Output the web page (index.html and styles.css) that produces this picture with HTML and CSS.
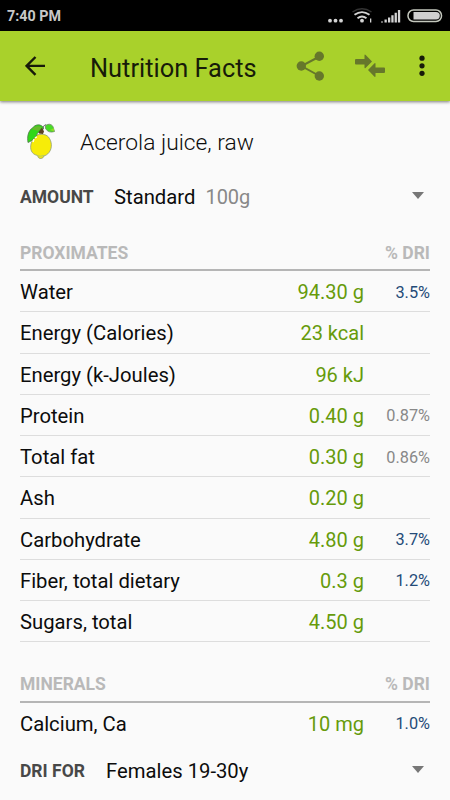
FILE: index.html
```
<!DOCTYPE html>
<html lang="en">

<head>
    <meta charset="utf-8">
    <title>Nutrition Facts</title>
    <link rel="stylesheet" href="styles.css">
</head>

<body>
    <div class="status-bar">
        <span class="time">7:40 PM</span>
        <svg class="status-icons" width="124" height="31" viewBox="0 0 124 31">
            <g fill="#d4d4d4">
                <circle cx="4" cy="20.7" r="1.9" />
                <circle cx="9.500" cy="20.7" r="1.9" />
                <circle cx="15" cy="20.7" r="1.9" />
                <circle cx="36" cy="20.7" r="1.9" />
                <path d="M55 22.5v-1h2v1zM58.5 22.5v-3h2.3v3zM62 22.5v-5h2.3v5zM65.3 22.5v-7.3h2.3v7.3zM68.6 22.5v-9.8h2.3v9.8zM71.9 22.5V10h2.3v12.500z" />
                <path d="M44 18.500h1.300v4h-1.300z" />
            </g>
            <g fill="none" stroke="#d4d4d4" stroke-width="1.8">
                <path d="M28.500 14.800q7.500-5.500 15 0" />
                <path d="M31.500 18.200q4.500-3.500 9 0" />
            </g>
            <path d="M26.500 12q9.500-6.500 19 0" fill="none" stroke="#333" stroke-width="1.500" />
            <rect x="82" y="10" width="33.500" height="11.500" rx="5.500" fill="none" stroke="#c4c8bd" stroke-width="1.500" />
            <path d="M87.500 12H110q3.800 0 3.800 3.700T110 19.500H87.500z" fill="#d0d0d0" />
        </svg>
    </div>

    <header class="toolbar">
        <svg class="back" width="21" height="20" viewBox="0 0 21 20">
            <path d="M10.500 1 1.600 9.900l8.900 8.900M2 9.900h18" />
        </svg>
        <h1>Nutrition Facts</h1>
        <svg class="share" width="30" height="30" viewBox="0 0 30 30">
            <path d="M23.500 5.500 5.500 15l18 10" fill="none" stroke="#66772b" stroke-width="2" />
            <circle cx="23.300" cy="5.300" r="4.700" />
            <circle cx="5.300" cy="15" r="4.700" />
            <circle cx="23.300" cy="25" r="4.700" />
        </svg>
        <svg class="compare" width="30" height="24" viewBox="0 0 30 24">
            <path d="M1 5h8.500V1.500q0-1.500 1.200-.5l6.300 6.500-6.500 6.500q-1 .8-1-.500V10.500H1q-1 0-1-1V6q0-1 1-1z" />
            <path d="M29 13.500h-8.500V10q0-1.500-1.200-.500L13 16l6.500 6.700q1 .8 1-.700v-3H29q1 0 1-1v-3.500q0-1-1-1z" />
        </svg>
        <svg class="more" width="6" height="22" viewBox="0 0 6 22">
            <circle cx="3" cy="3.200" r="2.600" />
            <circle cx="3" cy="10.800" r="2.600" />
            <circle cx="3" cy="18.300" r="2.600" />
        </svg>
    </header>

    <main>
        <div class="food">
            <svg width="30" height="38" viewBox="0 0 30 38">
                <path d="M9 13.500C11 11 19 10 22.500 14c3.500 4.500 4 11 .500 15.500-1.500 2-3.500 3-5 3.500q-1 3-4 2.500-2-.500-2.500-3C5 31 4 26 5 21q.5-4 4-7.500z" fill="#f7ec08" stroke="#8f9d79" stroke-width=".8" />
                <path d="M2 19.500C1 14 2 7.500 7 4.500 11-.5 18 2.500 17.500 6c-3 2-6.500 3-7 7-2 2-4.500 5-8.500 6.500z" fill="#30d817" stroke="#54764f" stroke-width=".8" />
                <path d="M6 6q4-4.500 10-1.500l-4 3.500z" fill="#68b82c" />
                <path d="M12.500 9 16 4.500l2 4-1 2.500-4-.500z" fill="#5b4421" />
                <path d="M17 6q0-4 3-4.500" fill="none" stroke="#777" />
                <path d="M19.500 2.500q4.500-3 7.500 1l1.500 5q-6 2-9-3z" fill="#48dc26" stroke="#718b68" stroke-width=".8" />
                <path d="m24 7 4 1.500V5z" fill="#8bdc27" />
                <path d="M7 19q1-4.500 4-5" fill="none" stroke="#fffff0" stroke-width="1.500" stroke-dasharray="3 1.500" />
                <path d="M11 32.500q3 1.500 7 0" fill="none" stroke="#b6cb62" />
            </svg>
            <h2>Acerola juice, raw</h2>
        </div>

        <div class="picker amount">
            <span class="label">AMOUNT</span>
            <span class="choice">Standard</span>
            <span class="weight">100g</span>
            <span class="arrow"></span>
        </div>

        <section class="facts">
            <div class="heading"><span>PROXIMATES</span><span>% DRI</span></div>
            <div class="row"><span class="name">Water</span><span class="value">94.30 g</span><span class="dri">3.5%</span></div>
            <div class="row"><span class="name">Energy (Calories)</span><span class="value">23 kcal</span><span class="dri"></span></div>
            <div class="row"><span class="name">Energy (k-Joules)</span><span class="value">96 kJ</span><span class="dri"></span></div>
            <div class="row"><span class="name">Protein</span><span class="value">0.40 g</span><span class="dri low">0.87%</span></div>
            <div class="row"><span class="name">Total fat</span><span class="value">0.30 g</span><span class="dri low">0.86%</span></div>
            <div class="row"><span class="name">Ash</span><span class="value">0.20 g</span><span class="dri"></span></div>
            <div class="row"><span class="name">Carbohydrate</span><span class="value">4.80 g</span><span class="dri">3.7%</span></div>
            <div class="row"><span class="name">Fiber, total dietary</span><span class="value">0.3 g</span><span class="dri">1.2%</span></div>
            <div class="row"><span class="name">Sugars, total</span><span class="value">4.50 g</span><span class="dri"></span></div>
        </section>

        <section class="facts minerals">
            <div class="heading"><span>MINERALS</span><span>% DRI</span></div>
            <div class="row"><span class="name">Calcium, Ca</span><span class="value">10 mg</span><span class="dri">1.0%</span></div>
        </section>
    </main>

    <footer class="picker dri-for">
        <span class="label">DRI FOR</span>
        <span class="choice">Females 19-30y</span>
        <span class="arrow"></span>
    </footer>
</body>

</html>
```

FILE: styles.css
```
* {
    box-sizing: border-box;
}

body {
    margin: 0;
    height: 800px;
    display: flex;
    flex-direction: column;
    overflow: hidden;
    background: #fafafa;
    color: #0c0c0c;
    font-family: Roboto, sans-serif;
    font-size: 20px;
    white-space: nowrap;
}

h1,
h2 {
    margin: 0;
}

.status-bar {
    flex: none;
    height: 31px;
    display: flex;
    justify-content: space-between;
    padding-left: 7px;
    background: #000;
}

.time {
    color: #c8c8c8;
    font-size: 14.3px;
    font-weight: 700;
    line-height: 33px;
}

.toolbar {
    flex: none;
    height: 70px;
    display: flex;
    align-items: center;
    padding: 0 25px 0 25px;
    background: #a9d12b;
    box-shadow: 0 1px 3px rgba(0, 0, 0, 0.5);

    h1 {
        width: 206px;
        margin-left: 44px;
        padding-top: 3px;
        font-size: 25.4px;
        font-weight: 400;
        color: #171b09;
    }
}

.back {
    fill: none;
    stroke: #171b09;
    stroke-width: 2.4;
}

.share,
.compare {
    fill: #66772b;
}

.compare {
    margin-left: 29px;
}

.more {
    margin-left: auto;
    fill: #171b09;
}

main {
    flex: none;
    height: 643px;
    padding: 0 20px;
}

.food {
    height: 72px;
    display: flex;
    padding: 22px 0 0 6px;

    h2 {
        margin-left: 24px;
        font-size: 22.8px;
        font-weight: 300;
        line-height: 39px;
    }
}

.picker {
    display: flex;
    align-items: center;
}

.amount {
    height: 48px;
}

.label {
    width: 94px;
    color: #484848;
    font-size: 17.5px;
    font-weight: 700;
}

.choice {
    font-size: 20.25px;
}

.weight {
    margin-left: 10px;
    color: #888;
}

.arrow {
    margin: 0 6px 3px auto;
    border: 6px solid transparent;
    border-top: 7px solid #777;
    border-bottom: 0;
}

.facts {
    padding-top: 13px;
}

.minerals {
    padding-top: 24px;
}

.heading {
    height: 37px;
    display: flex;
    justify-content: space-between;
    border-bottom: 2px solid #b5b5b5;
    color: #b9b9b9;
    font-size: 17.5px;
    font-weight: 700;
    line-height: 38px;
}

.minerals .heading {
    line-height: 37px;
}

.row {
    height: 41.25px;
    display: flex;
    align-items: center;
    padding-top: 2px;
    border-bottom: 1px solid #ddd;
}

.minerals .row {
    padding-top: 0;
    border-bottom: 0;
}

.name {
    flex: 1;
    font-size: 20.25px;
}

.value {
    color: #669b0b;
}

.dri {
    width: 66px;
    color: #244b78;
    font-size: 16.3px;
    text-align: right;
}

.low {
    color: #888;
}

.dri-for {
    height: 54px;
    padding: 0 20px;
    background: #fafafa;

    .label {
        width: 86px;
    }
}
```
